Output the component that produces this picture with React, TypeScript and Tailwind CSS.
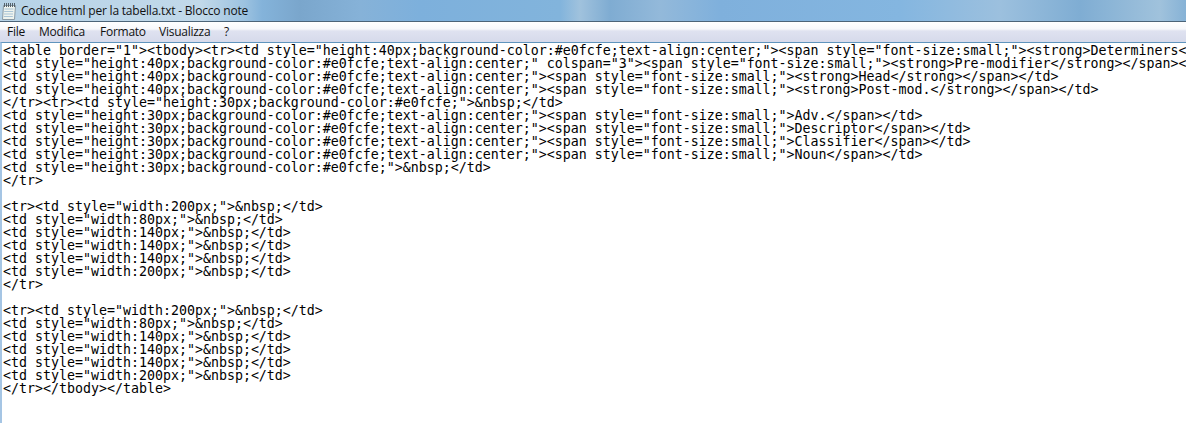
const lines = [
  `<table border="1"><tbody><tr><td style="height:40px;background-color:#e0fcfe;text-align:center;"><span style="font-size:small;"><strong>Determiners</strong></span></td>`,
  `<td style="height:40px;background-color:#e0fcfe;text-align:center;" colspan="3"><span style="font-size:small;"><strong>Pre-modifier</strong></span></td>`,
  `<td style="height:40px;background-color:#e0fcfe;text-align:center;"><span style="font-size:small;"><strong>Head</strong></span></td>`,
  `<td style="height:40px;background-color:#e0fcfe;text-align:center;"><span style="font-size:small;"><strong>Post-mod.</strong></span></td>`,
  `</tr><tr><td style="height:30px;background-color:#e0fcfe;">&nbsp;</td>`,
  `<td style="height:30px;background-color:#e0fcfe;text-align:center;"><span style="font-size:small;">Adv.</span></td>`,
  `<td style="height:30px;background-color:#e0fcfe;text-align:center;"><span style="font-size:small;">Descriptor</span></td>`,
  `<td style="height:30px;background-color:#e0fcfe;text-align:center;"><span style="font-size:small;">Classifier</span></td>`,
  `<td style="height:30px;background-color:#e0fcfe;text-align:center;"><span style="font-size:small;">Noun</span></td>`,
  `<td style="height:30px;background-color:#e0fcfe;">&nbsp;</td>`,
  `</tr>`,
  ``,
  `<tr><td style="width:200px;">&nbsp;</td>`,
  `<td style="width:80px;">&nbsp;</td>`,
  `<td style="width:140px;">&nbsp;</td>`,
  `<td style="width:140px;">&nbsp;</td>`,
  `<td style="width:140px;">&nbsp;</td>`,
  `<td style="width:200px;">&nbsp;</td>`,
  `</tr>`,
  ``,
  `<tr><td style="width:200px;">&nbsp;</td>`,
  `<td style="width:80px;">&nbsp;</td>`,
  `<td style="width:140px;">&nbsp;</td>`,
  `<td style="width:140px;">&nbsp;</td>`,
  `<td style="width:140px;">&nbsp;</td>`,
  `<td style="width:200px;">&nbsp;</td>`,
  `</tr></tbody></table>`,
];

const menus = [
  { label: "File", width: "w-[32px]" },
  { label: "Modifica", width: "w-[61px]" },
  { label: "Formato", width: "w-[59px]" },
  { label: "Visualizza", width: "w-[65px]" },
  { label: "?", width: "w-[8px]" },
];

function NotepadIcon() {
  return (
    <svg width="16" height="18" viewBox="0 0 16 18" className="shrink-0">
      <path d="M2.5 3.5h12l-1 14h-12z" fill="#eef3ee" stroke="#8a9aa5" />
      <path d="M3.5 7h9M3.2 9.5h9M3 12h9M2.8 14.5h9" stroke="#a9c4d6" />
      <path d="M3.5 1v4M5.5 1v4M7.5 1v4M9.5 1v4M11.5 1v4M13.5 1v4" stroke="#55626c" />
    </svg>
  );
}

export default function App() {
  return (
    <div className="flex h-[423px] w-[1186px] flex-col overflow-hidden bg-white font-['Open_Sans',sans-serif]">
      <div className="flex h-[21px] shrink-0 items-center gap-[4px] bg-[linear-gradient(90deg,#b6d2e6_0px,#c2d9ea_200px,#9cc2e0_245px,#84b3da_262px,#7aa6cc_300px,#86b2d8_360px,#7db0dc_420px,#82b4dc_560px,#a0c2dd_580px,#7facd2_610px,#93b9da_660px,#7fb0dc_720px,#84b6e0_900px,#9cc0de_1000px,#7fadd3_1080px,#a0c2dc_1160px,#86b2d6_1186px)] pl-[1px]">
        <NotepadIcon />
        <span className="text-[12px] tracking-[-0.2px] text-[#111]">Codice html per la tabella.txt - Blocco note</span>
      </div>
      <div className="flex h-[21px] shrink-0 items-center border-t border-[#4c6478] bg-[linear-gradient(180deg,#ffffff_0%,#f7f8fb_35%,#dfe2f0_45%,#d6daeb_100%)] pl-[7px] text-[12px] tracking-[-0.25px] text-[#111]">
        {menus.map((m) => (
          <span key={m.label} className={m.width}>
            {m.label}
          </span>
        ))}
      </div>
      <div className="flex-1 overflow-hidden border-l-2 border-t border-[#a5c5e4] border-t-[#5f94bd] pl-px pt-[1px] font-['DejaVu_Sans_Mono',monospace] text-[13.29px] leading-[13px] text-black">
        {lines.map((line, i) => (
          <div key={i} className="h-[13px] whitespace-pre">
            {line}
          </div>
        ))}
      </div>
    </div>
  );
}
